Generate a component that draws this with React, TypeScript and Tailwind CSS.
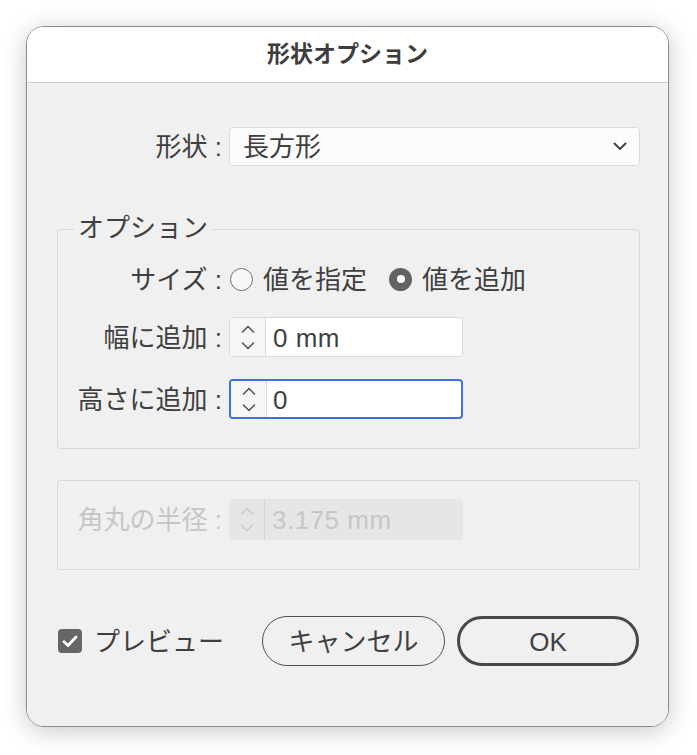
const font = {
  fontFamily: '"Liberation Sans", "Noto Sans CJK JP", "Noto Sans", sans-serif',
};

function Stepper({ disabled }: { disabled?: boolean }) {
  const stroke = disabled ? "#c9c9c9" : "#555555";
  return (
    <div
      className={`flex h-full w-[36px] shrink-0 flex-col items-center justify-center gap-[9px] border-r ${
        disabled ? "border-[#d2d2d2]" : "border-[#d9d9d9] bg-[#f6f6f6]"
      }`}
    >
      <svg width="14" height="8" viewBox="0 0 14 8" fill="none">
        <path d="M1.5 7L7 1.5L12.5 7" stroke={stroke} strokeWidth="1.6" strokeLinecap="round" strokeLinejoin="round" />
      </svg>
      <svg width="14" height="8" viewBox="0 0 14 8" fill="none">
        <path d="M1.5 1L7 6.5L12.5 1" stroke={stroke} strokeWidth="1.6" strokeLinecap="round" strokeLinejoin="round" />
      </svg>
    </div>
  );
}

function Label({ children, disabled }: { children: string; disabled?: boolean }) {
  return (
    <div
      className={`w-[164px] shrink-0 whitespace-nowrap pt-[2px] text-right text-[26px] ${
        disabled ? "text-[#c6c6c6]" : "text-[#3f3f3f]"
      }`}
    >
      {children}
    </div>
  );
}

export default function App() {
  return (
    <div className="min-h-[755px] w-[697px] bg-white pl-[26px] pt-[26px]" style={font}>
      <div className="flex h-[701px] w-[643px] flex-col overflow-hidden rounded-[18px] border border-[#8c8c8c] shadow-[0_4px_24px_rgba(0,0,0,0.22)]">
        <div className="flex h-[56px] shrink-0 items-center justify-center border-b border-[#cdcdcd] bg-white">
          <span className="text-[23px] font-bold text-[#3d3d3d]">形状オプション</span>
        </div>

        <div className="flex flex-1 flex-col bg-[#f0f0f0] pl-[30px] pr-[28px] pt-[44px]">
          {/* shape */}
          <div className="flex h-[39px] items-center">
            <div className="w-[165px] shrink-0 whitespace-nowrap pt-[2px] text-right text-[26px] text-[#3f3f3f]">
              形状 :
            </div>
            <div className="ml-[7px] flex h-full flex-1 items-center justify-between rounded-[4px] border border-[#d9d9d9] bg-[#fbfbfb] pl-[13px] pr-[12px]">
              <span className="pt-[2px] text-[26px] text-[#3f3f3f]">長方形</span>
              <svg width="14" height="9" viewBox="0 0 14 9" fill="none">
                <path d="M1.5 1.5L7 7L12.5 1.5" stroke="#444" strokeWidth="2" strokeLinecap="round" strokeLinejoin="round" />
              </svg>
            </div>
          </div>

          {/* options group */}
          <div className="relative mt-[63px] rounded-[3px] border border-[#d8d8d8] pb-[29px] pt-[29px]">
            <span className="absolute -top-[20px] left-[16px] bg-[#f0f0f0] px-[4px] text-[26px] leading-[36px] text-[#3f3f3f]">
              オプション
            </span>

            <div className="flex h-[40px] items-center">
              <Label>サイズ :</Label>
              <div className="ml-[8px] h-[23px] w-[23px] rounded-full border-[1.5px] border-[#707070] bg-[#f7f7f7]" />
              <span className="ml-[10px] pt-[2px] text-[26px] text-[#3f3f3f]">値を指定</span>
              <div className="ml-[22px] flex h-[23px] w-[23px] items-center justify-center rounded-full bg-[#626262]">
                <div className="h-[8px] w-[8px] rounded-full bg-white" />
              </div>
              <span className="ml-[10px] pt-[2px] text-[26px] text-[#3f3f3f]">値を追加</span>
            </div>

            <div className="mt-[18px] flex h-[40px] items-center">
              <Label>幅に追加 :</Label>
              <div className="ml-[7px] flex h-full w-[234px] items-center overflow-hidden rounded-[4px] border-[1.5px] border-[#d9d9d9] bg-white">
                <Stepper />
                <span className="pl-[7px] pt-[2px] text-[26px] tracking-[0.5px] text-[#3f3f3f]">0 mm</span>
              </div>
            </div>

            <div className="mt-[22px] flex h-[40px] items-center">
              <Label>高さに追加 :</Label>
              <div className="ml-[7px] flex h-full w-[234px] items-center overflow-hidden rounded-[4px] border-2 border-[#3d72dc] bg-white">
                <Stepper />
                <span className="pl-[6px] pt-[2px] text-[26px] text-[#3f3f3f]">0</span>
              </div>
            </div>
          </div>

          {/* corner radius (disabled) */}
          <div className="mt-[31px] rounded-[3px] border border-[#d8d8d8] pb-[29px] pt-[18px]">
            <div className="flex h-[41px] items-center">
              <Label disabled>角丸の半径 :</Label>
              <div className="ml-[7px] flex h-full w-[234px] items-center overflow-hidden rounded-[4px] bg-[#e6e6e6]">
                <Stepper disabled />
                <span className="pl-[7px] pt-[2px] text-[26px] tracking-[0.5px] text-[#c6c6c6]">3.175 mm</span>
              </div>
            </div>
          </div>

          {/* footer */}
          <div className="mt-[46px] flex h-[50px] items-center">
            <div className="flex w-[205px] shrink-0 items-center">
              <div className="ml-[1px] flex h-[24px] w-[24px] items-center justify-center rounded-[4px] bg-[#666666]">
                <svg width="16" height="13" viewBox="0 0 16 13" fill="none">
                  <path d="M2 6.8L6 10.5L14 2" stroke="white" strokeWidth="2.8" strokeLinecap="round" strokeLinejoin="round" />
                </svg>
              </div>
              <span className="ml-[12px] whitespace-nowrap pt-[2px] text-[26px] text-[#3f3f3f]">プレビュー</span>
            </div>
            <button className="flex h-full w-[183px] shrink-0 items-center justify-center rounded-full border-[1.5px] border-[#4f4f4f] pt-[2px] text-[26px] text-[#3f3f3f]">
              キャンセル
            </button>
            <button className="ml-[12px] flex h-full w-[182px] shrink-0 items-center justify-center rounded-full border-[3px] border-[#474747] pt-[2px] text-[26px] text-[#3f3f3f]">
              OK
            </button>
          </div>
        </div>
      </div>
    </div>
  );
}
